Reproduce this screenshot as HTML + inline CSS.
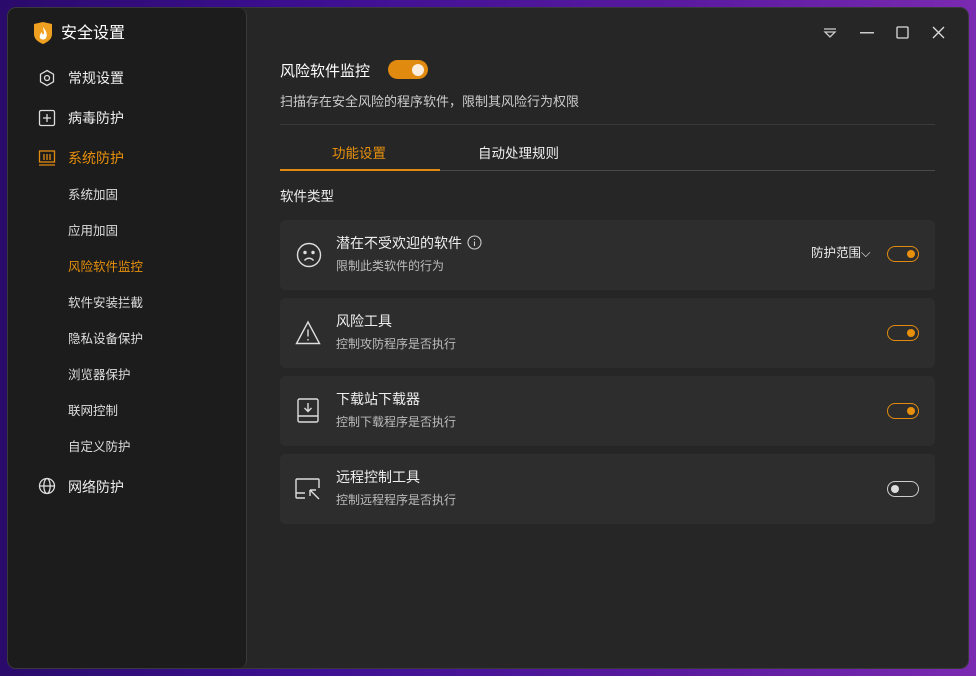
<!DOCTYPE html>
<html><head><meta charset="utf-8"><style>
*{margin:0;padding:0;box-sizing:border-box}
body{width:976px;height:676px;overflow:hidden;background:linear-gradient(90deg,#2a0a6a 0%,#3c0f90 30%,#5a1aa0 70%,#7a2ab0 100%);font-family:"Liberation Sans","Noto Sans CJK SC",sans-serif;color:#e8e8e8;position:relative}
.win{position:absolute;left:8px;top:8px;width:960px;height:660px;border-radius:8px;background:#262626;overflow:hidden;box-shadow:0 0 0 1px #3a3a3a}
.side{position:absolute;left:0;top:0;width:239px;height:100%;background:#1c1c1c;border-right:1px solid #3a3a3a;border-radius:8px}
.t{position:absolute;white-space:nowrap;line-height:1.2}
.nav{font-size:14px;color:#eee}
.sub{font-size:12.5px;color:#ddd}
.card{position:absolute;left:272px;width:655px;height:70px;background:#2d2d2d;border-radius:5px}
.card .h{position:absolute;left:56px;top:15px;font-size:14px;color:#eee;line-height:1.2}
.card .d{position:absolute;left:56px;top:39px;font-size:12px;color:#bbb;line-height:1.2}
.tg{position:absolute;width:32px;height:16px;border:1.5px solid #e08a10;border-radius:8px}
.tg i{position:absolute;right:3px;top:3px;width:8px;height:8px;border-radius:50%;background:#e8900c}
.tg.off{border-color:#ccc}.tg.off i{left:3px;right:auto;background:#ddd}
svg{position:absolute}
</style></head><body>
<div class="win">
<div class="side">
<svg style="left:25px;top:13px" width="20" height="24" viewBox="0 0 20 24"><path d="M1 3 L10 1 L19 3 L19 13 C19 18 15 21 10 23 C5 21 1 18 1 13Z" fill="#f0a020"/><path d="M10 6 C13 10 15 13 13 17 C12 19 8 19 7 17 C6 14 8 12 9 11 C9 14 11 14 11 12 C11 10 10 8 10 6Z" fill="#fff"/></svg>
<div class="t" style="left:53px;top:16px;font-size:16px;color:#fff">安全设置</div>
<svg style="left:30px;top:61px" width="18" height="18" viewBox="0 0 18 18" fill="none" stroke="#ddd" stroke-width="1.3"><path d="M9 1.5 L15.5 5.2 L15.5 12.8 L9 16.5 L2.5 12.8 L2.5 5.2Z"/><circle cx="9" cy="9" r="2.5"/></svg>
<div class="t nav" style="left:60px;top:62px">常规设置</div>
<svg style="left:30px;top:101px" width="18" height="18" viewBox="0 0 18 18" fill="none" stroke="#ddd" stroke-width="1.3"><rect x="1.5" y="1.5" width="15" height="15" rx="1.5"/><path d="M9 5v8M5 9h8"/></svg>
<div class="t nav" style="left:60px;top:102px">病毒防护</div>
<svg style="left:30px;top:141px" width="18" height="18" viewBox="0 0 18 18" fill="none" stroke="#e08a10" stroke-width="1.3"><rect x="1.5" y="2" width="15" height="11"/><path d="M1 16h16M6 5v6M9 5v6M12 5v6"/></svg>
<div class="t nav" style="left:60px;top:142px;color:#e8900c">系统防护</div>
<div class="t sub" style="left:60px;top:180px">系统加固</div>
<div class="t sub" style="left:60px;top:216px">应用加固</div>
<div class="t sub" style="left:60px;top:252px;color:#e8900c">风险软件监控</div>
<div class="t sub" style="left:60px;top:288px">软件安装拦截</div>
<div class="t sub" style="left:60px;top:324px">隐私设备保护</div>
<div class="t sub" style="left:60px;top:360px">浏览器保护</div>
<div class="t sub" style="left:60px;top:396px">联网控制</div>
<div class="t sub" style="left:60px;top:432px">自定义防护</div>
<svg style="left:30px;top:469px" width="18" height="18" viewBox="0 0 18 18" fill="none" stroke="#ddd" stroke-width="1.3"><circle cx="9" cy="9" r="7.5"/><ellipse cx="9" cy="9" rx="3.2" ry="7.5"/><path d="M1.5 9h15"/></svg>
<div class="t nav" style="left:60px;top:471px">网络防护</div>
</div>
<svg style="left:815px;top:19px" width="14" height="12" viewBox="0 0 14 12" fill="none" stroke="#ccc" stroke-width="1.3"><path d="M1 2h12M2 5h10L7 10Z"/></svg>
<svg style="left:852px;top:24px" width="14" height="2"><rect width="14" height="1.5" fill="#ccc"/></svg>
<svg style="left:888px;top:18px" width="13" height="13" viewBox="0 0 13 13" fill="none" stroke="#ddd" stroke-width="1.3"><rect x="1" y="1" width="11" height="11" rx="1"/></svg>
<svg style="left:924px;top:18px" width="13" height="13" viewBox="0 0 13 13" fill="none" stroke="#ddd" stroke-width="1.3"><path d="M1 1l11 11M12 1L1 12"/></svg>
<div class="t" style="left:272px;top:55px;font-size:15px;color:#fff">风险软件监控</div>
<div style="position:absolute;left:380px;top:52px;width:40px;height:19px;border-radius:10px;background:#e08a10"><i style="position:absolute;right:4px;top:3.5px;width:12px;height:12px;border-radius:50%;background:#fbeede"></i></div>
<div class="t" style="left:272px;top:86px;font-size:13px;color:#ccc">扫描存在安全风险的程序软件，限制其风险行为权限</div>
<div style="position:absolute;left:272px;top:116px;width:655px;height:1px;background:#3a3a3a"></div>
<div class="t" style="left:324px;top:138px;font-size:13.5px;color:#e8900c">功能设置</div>
<div class="t" style="left:470px;top:138px;font-size:13.5px;color:#eee">自动处理规则</div>
<div style="position:absolute;left:272px;top:162px;width:655px;height:1px;background:#4a4a4a"></div>
<div style="position:absolute;left:272px;top:161px;width:160px;height:2px;background:#e08a10"></div>
<div class="t" style="left:272px;top:181px;font-size:13.5px;color:#eee">软件类型</div>

<div class="card" style="top:212px">
<svg style="left:16px;top:22px" width="26" height="26" viewBox="0 0 26 26" fill="none" stroke="#ddd" stroke-width="1.4"><circle cx="13" cy="13" r="11.5"/><circle cx="9" cy="10.5" r="1" fill="#ddd"/><circle cx="17" cy="10.5" r="1" fill="#ddd"/><path d="M8.5 18.5c2.5-3 6.5-3 9 0"/></svg>
<div class="h">潜在不受欢迎的软件</div>
<svg style="left:187px;top:15px" width="15" height="15" viewBox="0 0 15 15" fill="none" stroke="#ccc" stroke-width="1.1"><circle cx="7.5" cy="7.5" r="6.5"/><path d="M7.5 6.5v4.5M7.5 4v1"/></svg>
<div class="d">限制此类软件的行为</div>
<div class="t" style="left:531px;top:26px;font-size:12.5px;color:#eee">防护范围⌵</div>
<div class="tg" style="left:607px;top:26px"><i></i></div>
</div>
<div class="card" style="top:290px">
<svg style="left:15px;top:22px" width="26" height="26" viewBox="0 0 26 26" fill="none" stroke="#ddd" stroke-width="1.4"><path d="M13 2L24.5 23.5H1.5Z"/><path d="M13 9.5v7M13 19v1.5"/></svg>
<div class="h">风险工具</div>
<div class="d">控制攻防程序是否执行</div>
<div class="tg" style="left:607px;top:27px"><i></i></div>
</div>
<div class="card" style="top:368px">
<svg style="left:17px;top:22px" width="22" height="26" viewBox="0 0 22 26" fill="none" stroke="#ddd" stroke-width="1.4"><rect x="1" y="1" width="20" height="23" rx="1.5"/><path d="M1 18h20M11 5v8M7.5 10l3.5 3.5 3.5-3.5"/></svg>
<div class="h">下载站下载器</div>
<div class="d">控制下载程序是否执行</div>
<div class="tg" style="left:607px;top:27px"><i></i></div>
</div>
<div class="card" style="top:446px">
<svg style="left:15px;top:24px" width="26" height="22" viewBox="0 0 26 22" fill="none" stroke="#ddd" stroke-width="1.4"><path d="M10 20H2a1 1 0 0 1-1-1V2a1 1 0 0 1 1-1h21a1 1 0 0 1 1 1v8"/><path d="M1 15h9M15 12l9 9M15 12v6M15 12h6"/></svg>
<div class="h">远程控制工具</div>
<div class="d">控制远程程序是否执行</div>
<div class="tg off" style="left:607px;top:27px"><i></i></div>
</div>
</div>
</body></html>
